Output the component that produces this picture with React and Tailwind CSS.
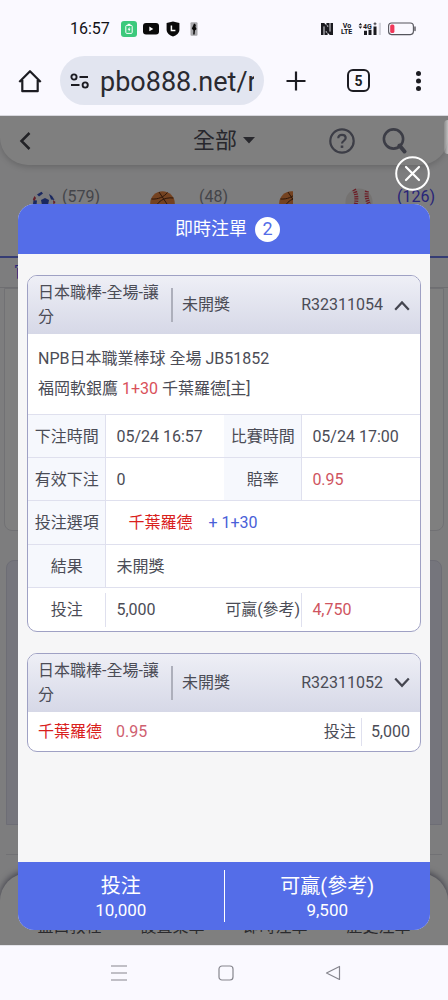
import React from "react";

function StatusBar() {
  return (
    <div className="flex h-14 items-center pt-[2px] pl-[70px] pr-8 text-[#111116]">
      <span className="w-[51px] text-base leading-5">16:57</span>
      <div className="flex flex-1 items-center">
        <svg className="mr-[6px] h-4 w-4" viewBox="0 0 16 16" aria-hidden="true">
          <rect width="16" height="16" rx="3" fill="#3cc97c" />
          <rect x="4.8" y="4.4" width="6.4" height="8" rx="1" fill="none" stroke="#fff" strokeWidth="1" />
          <path d="M6.6 3.4h2.8" stroke="#fff" strokeWidth="1.2" />
          <path d="M8.6 5.8 6.6 8.8h1.2v2l1.800-3H8.400z" fill="#fff" />
        </svg>
        <svg className="mr-[7px] h-3 w-4" viewBox="0 0 16 12" aria-hidden="true">
          <rect width="16" height="11.6" rx="3" fill="#0a0a0a" />
          <path d="M6.3 3.6v4.6l4-2.3z" fill="#fff" />
        </svg>
        <svg className="mr-[10px] h-4 w-[14px]" viewBox="0 0 14 16" aria-hidden="true">
          <path d="M7 .6 13.4 2v7c0 3-3 5.200-6.400 6.600C3.600 14.200.6 12 .6 9V2z" fill="#0a0a0a" />
          <path d="M5.400 4.600v5h4" fill="none" stroke="#fff" strokeWidth="1.500" />
        </svg>
        <svg className="h-[14px] w-2" viewBox="0 0 8 14" aria-hidden="true">
          <rect x=".5" y=".3" width="7" height="13.400" rx="1" fill="#a8a8ac" />
          <path d="M4 1.500c1.600.4 2.400 1.800 1.400 3.300L6.600 7 5 8.600l-.4 3.800H3.200L3.400 8.600 1.800 6.400 3 4z" fill="#0a0a0a" />
        </svg>
      </div>
      <svg className="mr-[9px] h-3 w-3" viewBox="0 0 12 12" aria-hidden="true">
        <path
          d="M0 0h3.200l4 4.200V2.400H5.400V0H12v12H8.800l-4-4.200v1.800h1.800V12H0z"
          fill="#1a1a1f"
        />
        <path d="M3 12V3.400M9 0v8.600" stroke="#faf9ff" strokeWidth=".9" />
      </svg>
      <div className="mr-[6px] flex w-[10px] flex-col text-center text-[7px] leading-[6px] font-bold">
        <span>Vo</span>
        <span className="-ml-px">LTE</span>
      </div>
      <svg className="mr-[6px] h-[14px] w-6" viewBox="0 0 24 14" aria-hidden="true">
        <path d="M.6 3.200 2.400 1l1.800 2.200zM.6 4.600h3.600L2.400 6.800z" fill="#1a1a1f" />
        <text x="5" y="6.500" fontSize="7" fontWeight="700" fontFamily="Roboto, sans-serif" fill="#1a1a1f">4G</text>
        <path d="M15.500 1.800h3M17 .3v3" stroke="#1a1a1f" strokeWidth=".8" />
        <path d="M6 8.800h3V13H6zM10.500 7.800h3V13h-3zM15.500 4.600h3V13h-3z" fill="#1a1a1f" />
        <path d="M20.800.8h2.200V13h-2.200z" fill="#d4d4dc" />
      </svg>
      <svg className="h-[14px] w-7" viewBox="0 0 28 14" aria-hidden="true">
        <rect x=".6" y="1" width="24.800" height="11.600" rx="3" fill="none" stroke="#55555c" strokeWidth="1.100" />
        <rect x="2.200" y="2.600" width="4.200" height="8.400" rx="1.500" fill="#f0385a" />
        <path d="M27 5v3.600" stroke="#55555c" strokeWidth="1.400" strokeLinecap="round" />
      </svg>
    </div>
  );
}

function BrowserBar() {
  return (
    <div className="flex h-[49px] items-center pr-5 pl-[18px] text-[#1c1c22]">
      <button type="button" aria-label="Home" className="mr-[18px]">
        <svg className="h-6 w-6" viewBox="0 0 24 24" fill="none" stroke="currentColor" strokeWidth="2.200" aria-hidden="true">
          <path d="M1.300 13 12 2.200 22.700 13M4.300 11v11.200h15.400V11" strokeLinejoin="round" />
        </svg>
      </button>
      <div className="flex h-full min-w-0 flex-1 items-center rounded-full bg-[#e2e5f0] pr-[10px] pl-[10px]">
        <svg className="mr-[10px] h-5 w-5 shrink-0" viewBox="0 0 20 20" fill="none" stroke="currentColor" strokeWidth="1.900" aria-hidden="true">
          <circle cx="4" cy="6" r="2.600" />
          <path d="M9.500 6H18M1 14h8.500" />
          <circle cx="15.200" cy="14" r="2.600" />
        </svg>
        <input
          aria-label="Address"
          readOnly
          value="pbo888.net/r"
          className="w-full min-w-0 bg-transparent pt-[2px] text-[27px] leading-8 text-[#2a2a30] outline-none"
        />
      </div>
      <button type="button" aria-label="New tab" className="ml-[22px]">
        <svg className="h-5 w-5" viewBox="0 0 20 20" fill="none" stroke="currentColor" strokeWidth="2.200" aria-hidden="true">
          <path d="M10 .5v19M.5 10h19" />
        </svg>
      </button>
      <button
        type="button"
        aria-label="Tabs"
        className="mr-[41px] ml-[41px] flex h-[23px] w-[23px] items-center justify-center rounded-md border-2 border-[#1c1c22] text-sm leading-4 font-bold"
      >
        5
      </button>
      <button type="button" aria-label="Menu">
        <svg className="h-5 w-[17px]" viewBox="0 0 17 20" fill="currentColor" aria-hidden="true">
          <circle cx="7.500" cy="2.600" r="2.500" />
          <circle cx="7.500" cy="10" r="2.500" />
          <circle cx="7.500" cy="17.400" r="2.500" />
        </svg>
      </button>
    </div>
  );
}

function SoccerBall() {
  return (
    <svg className="h-6 w-6" viewBox="0 0 24 24" aria-hidden="true">
      <circle cx="12" cy="12" r="11.800" fill="#f4f4fa" />
      <path d="M5 3.500 9.500.8 11 2.600 7 5.500zM9 9l4-2 4 2-1 5h-6zM17 3l3 2 2.500 4-3.500-.5zM1.500 9 5 9.500 4.500 14 1 13z" fill="#3450c0" />
      <path d="M.8 8.500 2.500 5l1.500 2-1.500 3zM21 9l2.500 2-2 3z" fill="#c83a4c" />
    </svg>
  );
}

function Basketball() {
  return (
    <svg className="h-[25px] w-[25px]" viewBox="0 0 25 25" aria-hidden="true">
      <circle cx="12.500" cy="12.500" r="12.300" fill="#e88440" />
      <path d="M1.500 8C8 8.500 14 6 17.500 1.500M4 20C7 10 14 6 23.500 7M9 1l3 4.500L17 13" fill="none" stroke="#5a2c12" strokeWidth="1" />
    </svg>
  );
}

function Baseball() {
  return (
    <svg className="h-7 w-7" viewBox="0 0 28 28" aria-hidden="true">
      <circle cx="14" cy="14" r="13.600" fill="#e8e4e2" />
      <path d="M9 1.500c3 5 3 11 1 18M22 3c-1 5 0 10 3 15" fill="none" stroke="#d83a4c" strokeWidth="4" strokeDasharray="1.300 1" />
    </svg>
  );
}

function BackgroundPage() {
  return (
    <div className="flex h-full flex-col overflow-hidden bg-[#fafafc] text-base text-[#888a94]">
      <header className="flex h-[49px] shrink-0 items-center rounded-b-[28px] bg-white pr-10 pl-[18px] shadow-[0_2px_6px_rgba(0,0,0,0.18)]">
        <button type="button" aria-label="Back" className="text-[#44444c]">
          <svg className="h-5 w-[14px]" viewBox="0 0 14 20" fill="none" stroke="currentColor" strokeWidth="2.500" aria-hidden="true">
            <path d="M11.500 2 3.500 10l8 8" />
          </svg>
        </button>
        <button type="button" className="ml-[161px] flex items-center gap-[6px] text-[22px] leading-7 text-[#50505a]">
          全部
          <svg className="h-[7px] w-3" viewBox="0 0 12 7" fill="currentColor" aria-hidden="true">
            <path d="M0 0h12L6 6.500z" />
          </svg>
        </button>
        <div className="ml-auto flex items-center gap-[27px] text-[#787a8c]">
          <button type="button" aria-label="Help">
            <svg className="h-[26px] w-[26px]" viewBox="0 0 26 26" fill="none" stroke="currentColor" strokeWidth="2.200" aria-hidden="true">
              <circle cx="13" cy="13" r="11.700" />
              <path d="M9.300 10.300c0-2.100 1.600-3.500 3.700-3.500s3.700 1.300 3.700 3.200c0 2.600-3.700 2.900-3.700 5.600" />
              <path d="M13 17.500v2.400" strokeWidth="2.600" />
            </svg>
          </button>
          <button type="button" aria-label="Search">
            <svg className="h-[26px] w-[26px]" viewBox="0 0 26 26" fill="none" stroke="currentColor" aria-hidden="true">
              <circle cx="11.500" cy="11" r="9.600" strokeWidth="2.600" />
              <path d="m17.500 17.500 5 6" strokeWidth="4" strokeLinecap="round" />
            </svg>
          </button>
        </div>
      </header>
      <nav className="flex h-[93px] shrink-0 border-b-2 border-[#6a78e8] pt-[22px] leading-5">
        <div className="flex w-[118px] items-start pl-8">
          <span className="mr-[6px] pt-1"><SoccerBall /></span>(579)
        </div>
        <div className="flex w-[138px] items-start pl-8">
          <span className="mr-6 pt-1"><Basketball /></span>(48)
        </div>
        <div className="flex flex-1 items-start pl-[23px]">
          <span className="w-[14px] overflow-hidden pt-1"><span className="block w-[25px]"><Basketball /></span></span>
        </div>
        <div className="flex items-start pr-[13px] text-[#5048f0]">
          <span className="mr-6 pt-px"><Baseball /></span>(126)
        </div>
      </nav>
      <div className="h-[30px] shrink-0 border-b border-[#dcdce2] pt-1 pl-[14px] leading-5 text-[#5048f0]">官</div>
      <div className="mx-1 h-[243px] shrink-0 rounded-b-lg border border-[#e2e2e8] bg-white" />
      <div className="mx-[6px] mt-[29px] h-[265px] shrink-0 rounded-t-lg border border-[#dadaea] bg-[#eaeaf8]" />
      <div className="mx-[6px] mt-[29px] h-5 shrink-0 border-t border-[#e2e2e8]" />
      <footer className="-mt-px flex flex-1 items-end rounded-t-[28px] bg-white px-[18px] pb-2 text-center leading-5 text-[#55555c] shadow-[0_-2px_6px_rgba(60,60,90,0.6)]">
        <span className="flex-1">盤口教程</span>
        <span className="flex-1">設置菜單</span>
        <span className="flex-1">即時注單</span>
        <span className="flex-1">歷史注單</span>
      </footer>
    </div>
  );
}

function CardHead({ id, open }) {
  return (
    <div className="flex h-[58px] items-center bg-linear-to-b from-[#eeeff6] to-[#d6d8e7] px-[10px]">
      <div className="w-[133px] pr-2 leading-6">日本職棒-全場-讓分</div>
      <div className="flex h-[34px] items-center border-l-2 border-[#adafbb] pl-[9px]">未開獎</div>
      <span className="ml-auto">{id}</span>
      <button type="button" aria-expanded={open} aria-label={id} className="ml-[11px]">
        <svg className="h-4 w-4" viewBox="0 0 16 16" fill="none" stroke="#454650" strokeWidth="2.200" aria-hidden="true">
          <path d={open ? "M1.200 12.800 8 5.400l6.800 7.400" : "M1.200 3.400 8 10.800l6.800-7.400"} />
        </svg>
      </button>
    </div>
  );
}

function Card({ children }) {
  return <section className="overflow-hidden rounded-[10px] border border-[#9fa1c4] bg-white">{children}</section>;
}

function Label({ children }) {
  return (
    <th scope="row" className="border-r border-b border-[#dfe0ee] bg-[#f6f8fd] p-0 pt-px text-center font-normal whitespace-nowrap">
      {children}
    </th>
  );
}

function Value({ children, span, red }) {
  return (
    <td colSpan={span} className={`border-b border-[#dfe0ee] p-0 pt-px pl-[10px] ${red ? "text-[#cf555f]" : ""}`}>
      {children}
    </td>
  );
}

function Modal() {
  return (
    <div role="dialog" aria-label="即時注單" className="relative flex flex-1 flex-col rounded-2xl bg-[#f6f6f7] text-base leading-6 text-[#4b4c56]">
      <button type="button" aria-label="Close" className="absolute -top-12 right-0">
        <svg className="h-[35px] w-[35px]" viewBox="0 0 35 35" fill="none" stroke="#fff" aria-hidden="true">
          <circle cx="17.500" cy="17.500" r="16.300" strokeWidth="2" />
          <path d="m11 11 13 13M24 11 11 24" strokeWidth="2.200" strokeLinecap="round" />
        </svg>
      </button>
      <h1 className="flex h-[50px] items-center justify-center gap-2 rounded-t-2xl bg-[#546de8] pl-[7px] text-lg text-white">
        即時注單
        <span className="flex h-[25px] w-[25px] items-center justify-center rounded-full bg-white text-[#546de8]">2</span>
      </h1>
      <div className="flex flex-1 flex-col gap-[21px] px-[9px] pt-[21px]">
        <Card>
          <CardHead id="R32311054" open />
          <div className="border-b border-[#dfe0ee] py-[10px] px-[10px] leading-[30px]">
            <p>NPB日本職業棒球 全場 JB51852</p>
            <p>
              福岡軟銀鷹 <span className="text-[#d9505a]">1+30</span> 千葉羅德[主]
            </p>
          </div>
          <table className="w-full table-fixed border-separate border-spacing-0">
            <colgroup>
              <col className="w-[20%]" />
              <col className="w-[30%]" />
              <col className="w-[20%]" />
              <col className="w-[30%]" />
            </colgroup>
            <tbody>
              <tr className="h-[43px]">
                <Label>下注時間</Label>
                <Value>05/24 16:57</Value>
                <Label>比賽時間</Label>
                <Value>05/24 17:00</Value>
              </tr>
              <tr className="h-[43px]">
                <Label>有效下注</Label>
                <Value>0</Value>
                <Label>賠率</Label>
                <Value red>0.95</Value>
              </tr>
              <tr className="h-11">
                <Label>投注選項</Label>
                <Value span={3}>
                  <span className="ml-3 text-[#d9201c]">千葉羅德</span>
                  <span className="ml-4 text-[#4a60d8]">+ 1+30</span>
                </Value>
              </tr>
              <tr className="h-[43px]">
                <Label>結果</Label>
                <Value span={3}>未開獎</Value>
              </tr>
              <tr className="h-[43px]">
                <th scope="row" className="p-0 font-normal">
                  <div className="flex h-[34px] items-center justify-center border-r border-[#dfe0ee]">投注</div>
                </th>
                <td className="p-0 pl-[10px]">5,000</td>
                <th scope="row" className="p-0 font-normal whitespace-nowrap">
                  <div className="flex h-[34px] items-center justify-center border-r border-[#dfe0ee]">可贏(參考)</div>
                </th>
                <td className="p-0 pl-[10px] text-[#cf555f]">4,750</td>
              </tr>
            </tbody>
          </table>
        </Card>
        <Card>
          <CardHead id="R32311052" open={false} />
          <div className="flex h-[39px] items-center px-[10px]">
            <span className="text-[#d9201c]">千葉羅德</span>
            <span className="ml-[14px] text-[#cf6070]">0.95</span>
            <span className="mr-[5px] ml-auto">投注</span>
            <span className="border-l border-[#dfe0ee] py-[2px] pl-[9px]">5,000</span>
          </div>
        </Card>
      </div>
      <div className="flex h-[68px] items-center rounded-b-2xl bg-[#546de8] text-center text-white">
        <div className="flex-1 border-r border-white pt-1">
          <div className="text-xl leading-6">投注</div>
          <div className="text-[17px] leading-6">10,000</div>
        </div>
        <div className="flex-1 pt-1">
          <div className="text-xl leading-6">可贏(參考)</div>
          <div className="text-[17px] leading-6">9,500</div>
        </div>
      </div>
    </div>
  );
}

export default function App() {
  return (
    <div className="flex min-h-screen flex-col bg-[#faf9ff] font-['Roboto','Noto_Sans_CJK_TC',sans-serif]">
      <div className="border-b border-[#d8d8de] pb-[10px]">
        <StatusBar />
        <BrowserBar />
      </div>
      <main className="relative flex flex-1 flex-col">
        <div className="absolute inset-0">
          <BackgroundPage />
        </div>
        <div className="relative flex flex-1 flex-col bg-black/50 px-[18px] pt-[88px] pb-[15px]">
          <Modal />
          <div className="absolute top-1 right-0 h-[34px] w-1 rounded-l bg-linear-to-r from-white/10 to-white/50" />
        </div>
      </main>
      <nav className="flex h-[55px] items-center justify-center gap-[91px] border-t border-[#e4e4ea] pl-1 text-[#86868e]">
        <button type="button" aria-label="Recents">
          <svg className="h-4 w-4" viewBox="0 0 16 16" fill="none" stroke="currentColor" strokeWidth="1.200" aria-hidden="true">
            <path d="M0 1h16M0 8h16M0 15h16" />
          </svg>
        </button>
        <button type="button" aria-label="Home screen">
          <svg className="h-4 w-4" viewBox="0 0 16 16" fill="none" stroke="currentColor" strokeWidth="1.200" aria-hidden="true">
            <rect x="1" y="1" width="14" height="14" rx="3" />
          </svg>
        </button>
        <button type="button" aria-label="Back screen">
          <svg className="h-4 w-4" viewBox="0 0 16 16" fill="none" stroke="currentColor" strokeWidth="1.200" strokeLinejoin="round" aria-hidden="true">
            <path d="M14.500 1.500v13L1.500 8z" />
          </svg>
        </button>
      </nav>
    </div>
  );
}
